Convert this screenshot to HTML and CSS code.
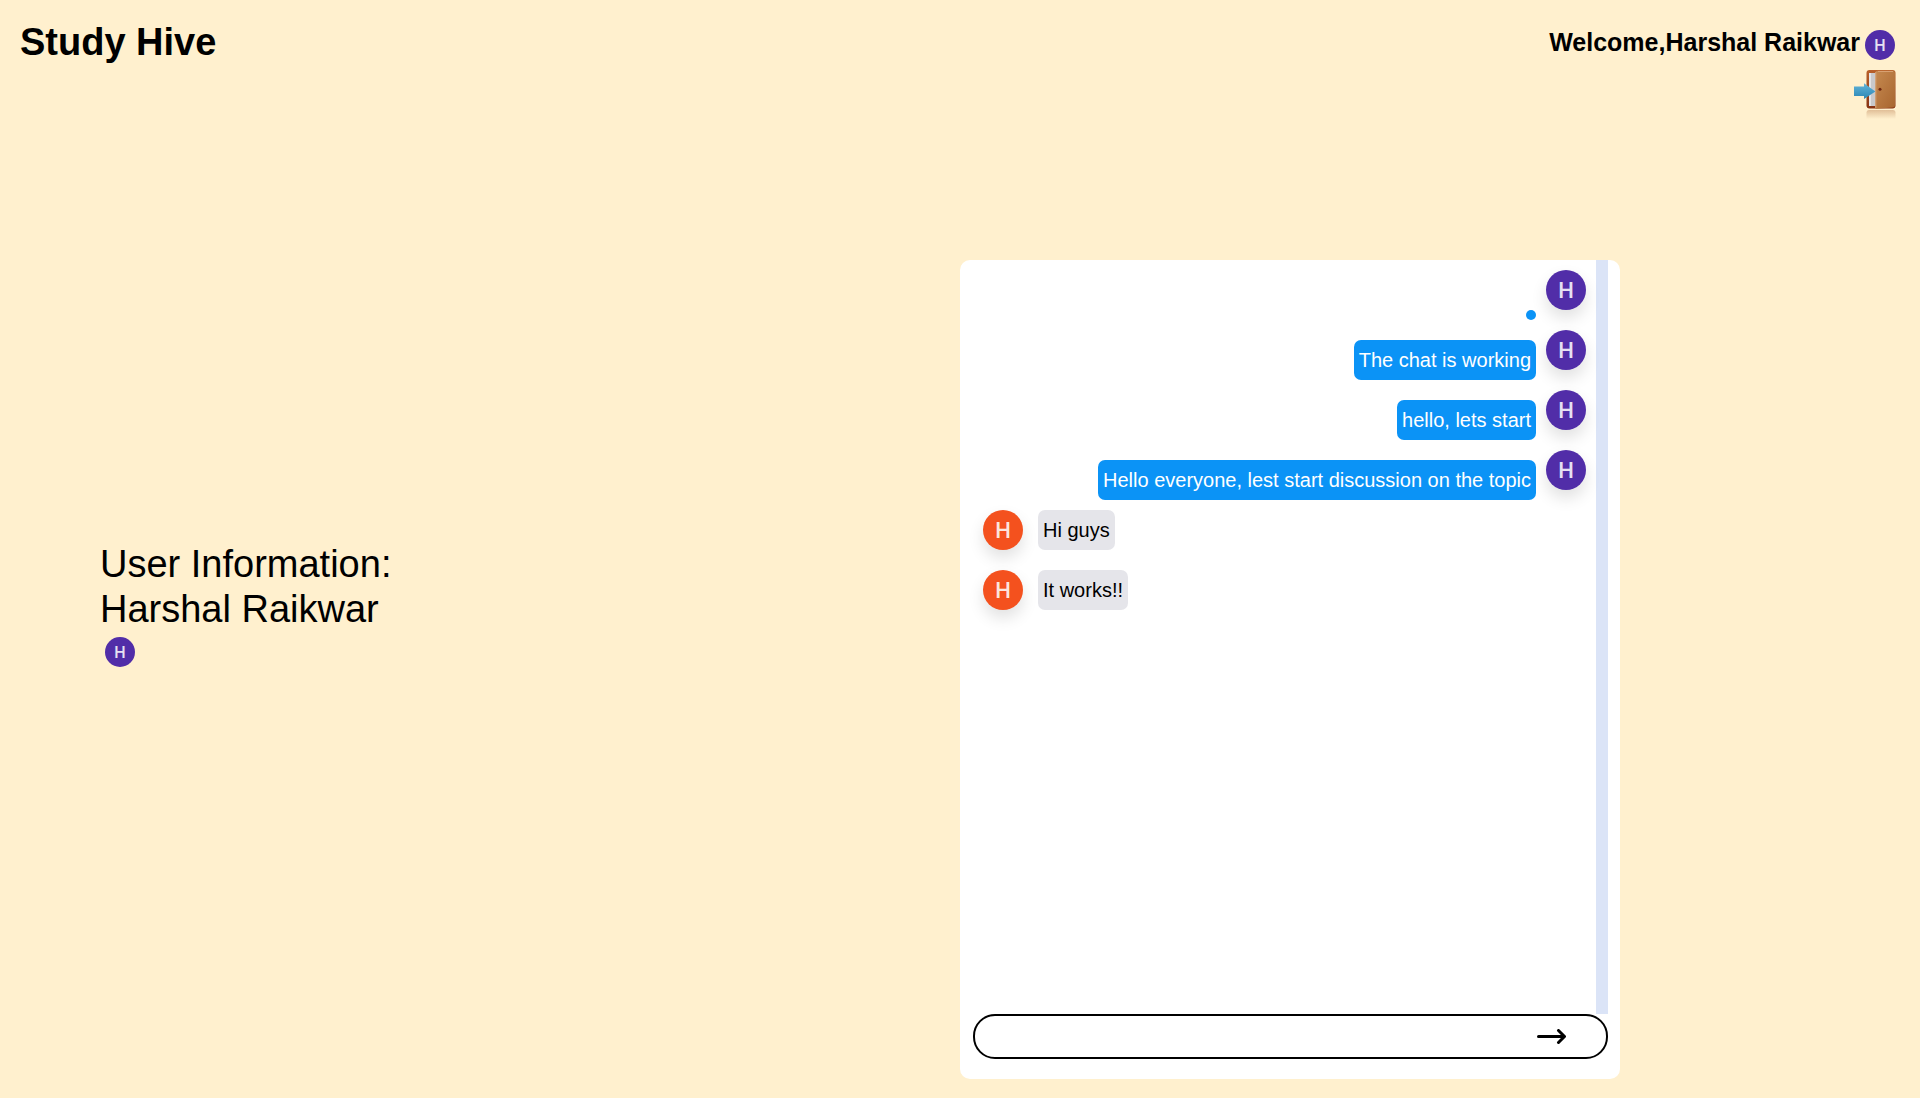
FILE: index.html
```html
<!DOCTYPE html>
<html lang="en">
<head>
    <meta charset="UTF-8">
    <meta name="viewport" content="width=device-width, initial-scale=1.0">
    <title>Study Hive</title>
    <link rel="stylesheet" href="styles.css">
</head>
<body>

    <header class="header">
        <h1>Study Hive</h1>
        <div class="account">
            <div class="welcome">
                <h2>Welcome,Harshal Raikwar</h2>
                <span class="avatar small">H</span>
            </div>
            <button class="sign-out" aria-label="Sign out">
                <svg viewBox="0 0 50 50" width="50" height="50">
                    <defs>
                        <linearGradient id="frame" x1="0" y1="0" x2="0" y2="1">
                            <stop offset="0" stop-color="#b9602a"/>
                            <stop offset="1" stop-color="#873312"/>
                        </linearGradient>
                        <linearGradient id="panel" x1="0" y1="0" x2="1" y2="1">
                            <stop offset="0" stop-color="#c68a50"/>
                            <stop offset="1" stop-color="#a8652f"/>
                        </linearGradient>
                        <linearGradient id="arrow" x1="0" y1="0" x2="0" y2="1">
                            <stop offset="0" stop-color="#62b4d9"/>
                            <stop offset="1" stop-color="#2b86b4"/>
                        </linearGradient>
                        <linearGradient id="shade" x1="0" y1="0" x2="0" y2="1">
                            <stop offset="0" stop-color="#b47546" stop-opacity="0.4"/>
                            <stop offset="1" stop-color="#b47546" stop-opacity="0"/>
                        </linearGradient>
                    </defs>
                    <rect x="16.5" y="0" width="29" height="38.5" rx="3" fill="url(#frame)"/>
                    <path d="M19 3h7v33h-7z" fill="#c9c9cb"/>
                    <path d="M19 3h2v33h-2z" fill="#e4e4e6"/>
                    <path d="M25.5 2Q26 .8 28 .8H43Q45 .8 45 3V35Q45 37.5 42.5 37.5L26 38.8Q25.2 38.8 25.2 37Z" fill="url(#panel)"/>
                    <path d="M25.8 2V38" stroke="#d8a477" stroke-width="1"/>
                    <path d="M28 1.5H43" stroke="#d8a172" stroke-width="1"/>
                    <circle cx="30" cy="19.3" r="1.5" fill="#6f2710"/>
                    <path d="M4 16.5H14V13.3L25.4 21.5L14 29V26H4Z" fill="url(#arrow)"/>
                    <path d="M16.5 42Q17 40 19 40H43Q45 40 45.5 42V49H16.5Z" fill="url(#shade)"/>
                </svg>
            </button>
        </div>
    </header>

    <main class="room">
        <section class="user-info">
            <p>User Information:</p>
            <p>Harshal Raikwar</p>
            <span class="avatar small">H</span>
        </section>

        <section class="chat">
            <div class="messages">
                <div class="message sent">
                    <span class="avatar">H</span>
                    <p></p>
                </div>
                <div class="message sent">
                    <span class="avatar">H</span>
                    <p>The chat is working</p>
                </div>
                <div class="message sent">
                    <span class="avatar">H</span>
                    <p>hello, lets start</p>
                </div>
                <div class="message sent">
                    <span class="avatar">H</span>
                    <p>Hello everyone, lest start discussion on the topic</p>
                </div>
                <div class="message received">
                    <span class="avatar">H</span>
                    <p>Hi guys</p>
                </div>
                <div class="message received">
                    <span class="avatar">H</span>
                    <p>It works!!</p>
                </div>
            </div>
            <form class="send-form">
                <input type="text" aria-label="Message">
                <button type="submit" aria-label="Send">
                    <svg viewBox="0 0 30 16" width="30" height="16">
                        <path d="M2.5 7.5H28M22.5 1.5L28.5 7.5L22.5 13.5" fill="none" stroke="#000" stroke-width="3" stroke-linecap="round" stroke-linejoin="round"/>
                    </svg>
                </button>
            </form>
        </section>
    </main>

    <script>
        const form = document.querySelector('.send-form');
        const input = form.querySelector('input');
        const messages = document.querySelector('.messages');

        form.addEventListener('submit', (e) => {
            e.preventDefault();
            if (!input.value) return;

            const message = document.createElement('div');
            message.className = 'message sent';
            message.innerHTML = '<span class="avatar">H</span><p></p>';
            message.querySelector('p').textContent = input.value;
            messages.appendChild(message);
            input.value = '';
        });
    </script>
</body>
</html>
```
FILE: styles.css
```css
* {
    box-sizing: border-box;
    margin: 0;
    padding: 0;
}

body {
    font-family: Arial, 'Liberation Sans', sans-serif;
    background-color: #fff0ce;
    color: #000;
    min-height: 100vh;
    display: flex;
    flex-direction: column;
}

button {
    background: none;
    border: none;
    cursor: pointer;
}

.header {
    display: flex;
    justify-content: space-between;
    align-items: flex-start;
    padding: 20px 20px 10px;
}

h1 {
    font-size: 38px;
    line-height: 45px;
}

.account {
    display: flex;
    flex-direction: column;
    align-items: flex-end;
}

.welcome {
    display: flex;
    padding: 10px 5px 10px 0;
    gap: 5px;
}

h2 {
    font-size: 25px;
    line-height: 24px;
}

.avatar {
    flex: none;
    display: flex;
    justify-content: center;
    align-items: center;
    width: 40px;
    height: 40px;
    padding-top: 1px;
    border-radius: 50%;
    background-color: #512da8;
    color: #e6e0f2;
    font-family: Roboto, sans-serif;
    font-size: 22px;
    font-weight: 500;
    line-height: 24px;
}

.avatar.small {
    width: 30px;
    height: 30px;
    font-size: 16px;
}

.sign-out svg {
    display: block;
}

.room {
    flex: 1;
    display: grid;
    grid-template-columns: 16fr 11fr 5fr;
    padding-bottom: 19px;
}

.user-info {
    align-self: center;
    padding-left: 100px;
    font-size: 38px;
    line-height: 45px;
}

.user-info .avatar {
    margin: 5px 0 0 5px;
}

.chat {
    display: flex;
    flex-direction: column;
    margin-top: 130px;
    padding: 0 12px 20px 13px;
    background-color: #fff;
    border-radius: 10px;
}

.messages {
    flex: 1;
    border-right: 12px solid #dbe4f7; /* scroll track */
}

.message {
    display: flex;
    min-height: 60px;
}

.message .avatar {
    margin: 10px;
    box-shadow: 0 8px 16px rgba(0, 0, 0, 0.12);
}

.message p {
    padding: 5px;
    border-radius: 7px;
    font-size: 20px;
    line-height: 30px;
}

.sent {
    flex-direction: row-reverse;
}

.sent p {
    align-self: flex-end;
    background-color: #0b93f6;
    color: #fff;
}

.received p {
    align-self: center;
    margin-left: 5px;
    background-color: #e5e5ea;
}

.received .avatar {
    background-color: #f4511e;
    color: #fde5dd;
}

.send-form {
    display: flex;
    height: 45px;
    border: 2px solid #000;
    border-radius: 22px;
}

.send-form input {
    flex: 1;
    min-width: 0;
    padding: 0 20px;
    border: none;
    outline: none;
    background: none;
    font-family: inherit;
    font-size: 20px;
}

.send-form button {
    display: flex;
    align-items: center;
    padding: 0 40px;
}
```
